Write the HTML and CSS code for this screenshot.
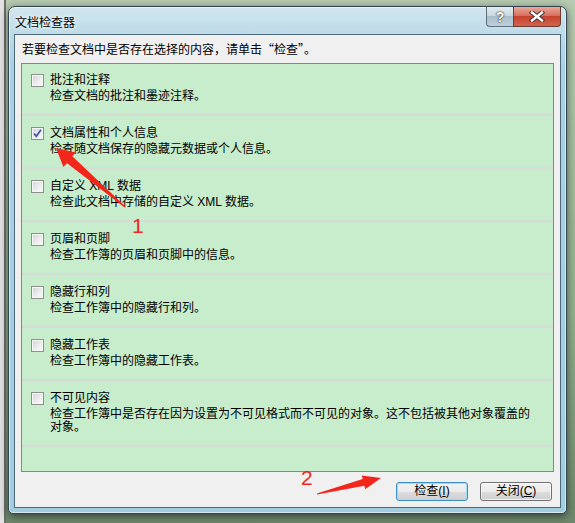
FILE: index.html
```html
<!DOCTYPE html>
<html lang="zh-CN">
<head>
    <meta charset="utf-8">
    <title>文档检查器</title>
    <link rel="stylesheet" href="styles.css">
</head>
<body>
    <div class="desktop">
        <div class="window">
            <div class="titlebar">
                <span class="title">文档检查器</span>
                <div class="caption-btns">
                    <button class="cap help">?</button>
                    <button class="cap close">
                        <svg width="16" height="11" viewBox="0 0 16 11">
                            <path d="M3 1.5 L13 9.5 M13 1.5 L3 9.5" stroke="#3b3b3b" stroke-width="4.4" stroke-linecap="square"/>
                            <path d="M3 1.5 L13 9.5 M13 1.5 L3 9.5" stroke="#ffffff" stroke-width="2.4" stroke-linecap="square"/>
                        </svg>
                    </button>
                </div>
            </div>

            <div class="client">
                <p class="hint">若要检查文档中是否存在选择的内容，请单击<span class="cjk">“检查”</span>。</p>

                <div class="panel">
                    <div class="item first">
                        <span class="box"></span>
                        <div class="name">批注和注释</div>
                        <div class="desc">检查文档的批注和墨迹注释。</div>
                    </div>
                    <div class="item">
                        <span class="box checked">
                            <svg width="11" height="11" viewBox="0 0 11 11"><path d="M2 5.5 L4.3 8.3 L9 1.8" fill="none" stroke="#3d55a5" stroke-width="1.7"/></svg>
                        </span>
                        <div class="name">文档属性和个人信息</div>
                        <div class="desc">检查随文档保存的隐藏元数据或个人信息。</div>
                    </div>
                    <div class="item">
                        <span class="box"></span>
                        <div class="name">自定义 XML 数据</div>
                        <div class="desc">检查此文档中存储的自定义 XML 数据。</div>
                    </div>
                    <div class="item">
                        <span class="box"></span>
                        <div class="name">页眉和页脚</div>
                        <div class="desc">检查工作簿的页眉和页脚中的信息。</div>
                    </div>
                    <div class="item">
                        <span class="box"></span>
                        <div class="name">隐藏行和列</div>
                        <div class="desc">检查工作簿中的隐藏行和列。</div>
                    </div>
                    <div class="item">
                        <span class="box"></span>
                        <div class="name">隐藏工作表</div>
                        <div class="desc">检查工作簿中的隐藏工作表。</div>
                    </div>
                    <div class="item">
                        <span class="box"></span>
                        <div class="name">不可见内容</div>
                        <div class="desc">检查工作簿中是否存在因为设置为不可见格式而不可见的对象。这不包括被其他对象覆盖的对象。</div>
                    </div>
                </div>

                <div class="actions">
                    <button class="btn default">检查(<u>I</u>)</button>
                    <button class="btn">关闭(<u>C</u>)</button>
                </div>
            </div>
        </div>
    </div>

    <!-- red annotations drawn over the dialog -->
    <svg class="marks" width="575" height="523" viewBox="0 0 575 523">
        <polygon fill="#f2261a" points="125.4,206.5 72.3,156.2 75.9,152.4 56,148 63.4,166.9 67.1,163.2 124.6,207.5"/>
        <polygon fill="#f2261a" points="317.1,494.6 364.4,485.8 365.2,489.2 381,478 361.8,475.6 362.7,479 316.9,493.4"/>
        <text x="132" y="233" class="num">1</text>
        <text x="301" y="485" class="num">2</text>
    </svg>
</body>
</html>
```

FILE: styles.css
```css
html, body {
    margin: 0;
    width: 575px;
    height: 523px;
    overflow: hidden;
}

body {
    font-family: "Liberation Sans", "Noto Sans CJK SC", sans-serif;
    font-size: 12px;
    color: #000;
    background:
        linear-gradient(90deg, #e2e2e2 0, #e2e2e2 4px, #6f6f6f 4px, #6f6f6f 6px, transparent 6px),
        linear-gradient(180deg, #b7cbb1 0%, #93b08d 60%, #6f876c 100%);
    position: relative;
}

.cjk {
    font-family: "Noto Sans CJK SC", sans-serif;
}

.desktop {
    padding: 6px 8px 9px 8px;
    height: 100%;
    box-sizing: border-box;
}

/* Aero style dialog frame */
.window {
    height: 100%;
    box-sizing: border-box;
    display: flex;
    flex-direction: column;
    padding: 0 5px 5px 5px;
    border: 1px solid #33454f;
    border-radius: 7px 7px 5px 5px;
    background: linear-gradient(180deg, #d3e6ee 0px, #bcdbe8 27px, #a9d1e3 60px, #a2cde0 100%);
    box-shadow: inset 0 0 0 1px rgba(255, 255, 255, 0.55), 0 2px 8px rgba(0, 0, 0, 0.55);
}

.titlebar {
    height: 27px;
    flex: none;
    display: flex;
    justify-content: space-between;
    align-items: flex-start;
}

.title {
    margin: 8px 0 0 1px;
    line-height: 16px;
    text-shadow: 0 0 6px rgba(255, 255, 255, 0.95), 0 0 3px rgba(255, 255, 255, 0.9);
}

.caption-btns {
    display: flex;
}

.cap {
    height: 20px;
    margin: 0;
    padding: 0;
    border: 1px solid #5f6f79;
    border-top: none;
    display: flex;
    align-items: center;
    justify-content: center;
}

.help {
    width: 27px;
    border-right: none;
    border-radius: 0 0 0 4px;
    background: linear-gradient(180deg, #e3ecf1 0%, #c9d9e2 45%, #a9bfcb 50%, #bcd0db 100%);
    font-family: "Liberation Sans", sans-serif;
    font-weight: bold;
    font-size: 14px;
    color: #fff;
    text-shadow: 0 0 1px #3a3a3a, 0 0 1px #3a3a3a, 0 0 2px #555;
}

.close {
    width: 48px;
    border-color: #6b3a31;
    border-radius: 0 0 4px 0;
    background: linear-gradient(180deg, #e9a99a 0%, #d8705d 45%, #c7432d 50%, #d1624c 100%);
}

.client {
    flex: 1;
    display: flex;
    flex-direction: column;
    background: #f0f0f0;
    border: 1px solid #4d6878;
}

.hint {
    margin: 0;
    padding: 6px 7px 0;
    line-height: 16px;
}

.panel {
    flex: 1;
    margin: 5px 6px 0;
    border: 1px solid #828790;
    background: #c7edcc;
}

.item {
    display: grid;
    grid-template-columns: 13px 1fr;
    column-gap: 6px;
    padding: 9px 17px 11px 9px;
    border-bottom: 2px solid #d5dbd5;
}

.item.first {
    padding-top: 8px;
}

.name {
    line-height: 17px;
}

.desc {
    grid-column: 2;
    margin-top: 1px;
    line-height: 13px;
}

.box {
    width: 13px;
    height: 13px;
    box-sizing: border-box;
    align-self: center;
    border: 1px solid #8e8f8f;
    background: linear-gradient(135deg, #d0d3d6 0%, #eeeeee 60%, #fafafa 100%);
    box-shadow: inset 0 0 0 1px #f7f7f7;
    display: flex;
    align-items: center;
    justify-content: center;
}

.actions {
    display: flex;
    justify-content: flex-end;
    gap: 12px;
    padding: 10px 8px 6px;
}

.btn {
    width: 72px;
    height: 19px;
    padding: 0;
    font-family: "Liberation Sans", "Noto Sans CJK SC", sans-serif;
    font-size: 12px;
    line-height: 15px;
    color: #000;
    border: 1px solid #707070;
    border-radius: 3px;
    background: linear-gradient(180deg, #f2f2f2 0%, #ebebeb 50%, #dddddd 50%, #cfcfcf 100%);
    box-shadow: inset 0 0 0 1px rgba(255, 255, 255, 0.7);
}

.btn.default {
    border-color: #3c8fcf;
    box-shadow: inset 0 0 0 1px #9ddcf7;
}

.marks {
    position: absolute;
    top: 0;
    left: 0;
    pointer-events: none;
}

.marks .num {
    font-family: "Liberation Sans", sans-serif;
    font-size: 21px;
    fill: #f2261a;
}
```
